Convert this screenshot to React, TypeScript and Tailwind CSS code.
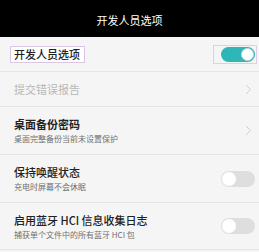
const font = { fontFamily: '"Noto Sans CJK SC", "Noto Sans", sans-serif' }

function Toggle({ on }: { on: boolean }) {
  return on ? (
    <div className="w-[34px] h-[15px] rounded-full bg-[#2fb6b7] flex items-center justify-end pr-[1px]">
      <div className="w-[13px] h-[13px] rounded-full bg-white border border-[#cfd8d8]" />
    </div>
  ) : (
    <div className="w-[34px] h-[16px] rounded-full bg-[#dedede] flex items-center pl-[1px]">
      <div className="w-[14px] h-[14px] rounded-full bg-white" />
    </div>
  )
}

function Chevron() {
  return (
    <svg width="7" height="11" viewBox="0 0 7 11" fill="none">
      <path d="M1 1l4.5 4.5L1 10" stroke="#cfcfcf" strokeWidth="1" />
    </svg>
  )
}

export default function App() {
  return (
    <div className="w-[259px] h-[252px] bg-[#f5f5f5] overflow-hidden" style={font}>
      {/* Header */}
      <div className="h-[37px] bg-black flex items-center justify-center pt-[4px] text-white text-[11px]">
        开发人员选项
      </div>

      {/* Developer options toggle */}
      <div className="h-[35px] flex items-center justify-between pl-[10px] pr-[2px] border-b border-[#e6e6e6]">
        <div className="border border-[#dcc6e4] bg-white px-[3px] h-[17px] w-[75px] flex items-center text-[11px] font-medium text-[#222]">
          开发人员选项
        </div>
        <div className="border border-[#e2cde8] w-[44px] h-[19px] flex items-center justify-end pr-[1px]">
          <Toggle on />
        </div>
      </div>

      {/* Bug report */}
      <div className="h-[35px] flex items-center justify-between pl-[14px] pr-[7px] border-b border-[#e6e6e6]">
        <span className="text-[11px] text-[#b8b8b8]">提交错误报告</span>
        <Chevron />
      </div>

      {/* Desktop backup password */}
      <div className="h-[48px] flex items-center justify-between pl-[14px] pr-[7px] border-b border-[#e6e6e6]">
        <div className="flex flex-col">
          <span className="text-[11px] leading-[16px] font-bold text-[#222]">桌面备份密码</span>
          <span className="text-[8px] leading-[12px] mt-[1px] text-[#707070]">桌面完整备份当前未设置保护</span>
        </div>
        <Chevron />
      </div>

      {/* Stay awake */}
      <div className="h-[48px] flex items-center justify-between pl-[14px] pr-[4px] border-b border-[#e6e6e6]">
        <div className="flex flex-col">
          <span className="text-[11px] leading-[16px] font-medium text-[#222]">保持唤醒状态</span>
          <span className="text-[8px] leading-[12px] mt-[1px] text-[#707070]">充电时屏幕不会休眠</span>
        </div>
        <Toggle on={false} />
      </div>

      {/* Bluetooth HCI log */}
      <div className="h-[47px] flex items-center justify-between pl-[14px] pr-[4px] border-b border-[#e6e6e6]">
        <div className="flex flex-col">
          <span className="text-[11px] leading-[16px] font-medium text-[#222]">启用蓝牙 HCI 信息收集日志</span>
          <span className="text-[8px] leading-[12px] mt-[1px] text-[#707070]">捕获单个文件中的所有蓝牙 HCI 包</span>
        </div>
        <Toggle on={false} />
      </div>
    </div>
  )
}
